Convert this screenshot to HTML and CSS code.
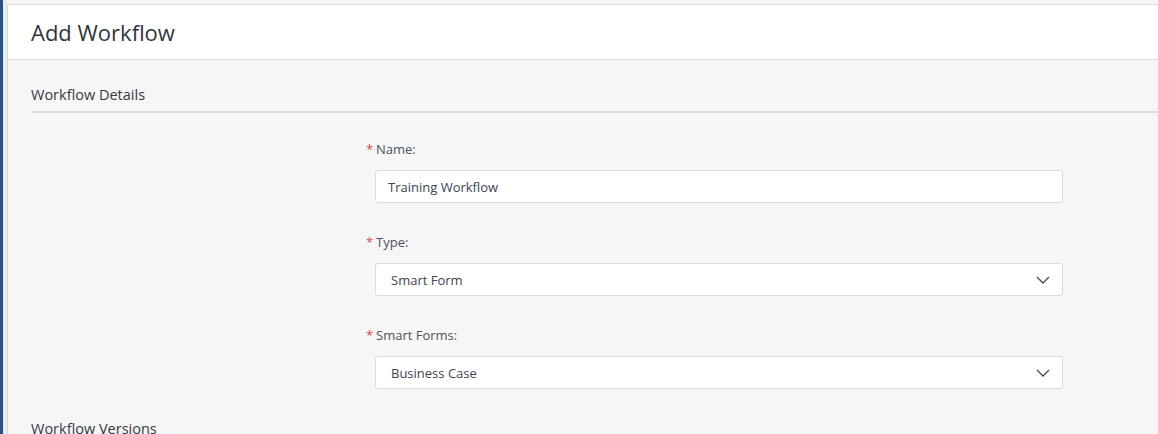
FILE: index.html
```html
<!DOCTYPE html>
<html>
<head>
<meta charset="utf-8">
<link rel="stylesheet" href="styles.css">
</head>
<body>
<div class="shell">
  <div class="rail"></div>
  <div class="gutter"></div>
  <main class="page">
    <header class="page-head">
      <h1 class="title">Add Workflow</h1>
    </header>
    <section class="section">
      <h2 class="section-title">Workflow Details</h2>
      <div class="form">
        <div class="field">
          <label class="label"><span class="req">*</span>Name:</label>
          <div class="control">Training Workflow</div>
        </div>
        <div class="field">
          <label class="label"><span class="req">*</span>Type:</label>
          <div class="control select">Smart Form
            <svg class="chev" width="14" height="8" viewBox="0 0 14 8"><path d="M1 1 L7 7 L13 1" fill="none" stroke="#3f5068" stroke-width="1.4"/></svg>
          </div>
        </div>
        <div class="field">
          <label class="label"><span class="req">*</span>Smart Forms:</label>
          <div class="control select">Business Case
            <svg class="chev" width="14" height="8" viewBox="0 0 14 8"><path d="M1 1 L7 7 L13 1" fill="none" stroke="#3f5068" stroke-width="1.4"/></svg>
          </div>
        </div>
      </div>
      <h2 class="section-title versions">Workflow Versions</h2>
    </section>
  </main>
</div>
</body>
</html>
```
FILE: styles.css
```css
html, body {
  margin: 0;
  padding: 0;
  height: 100%;
  overflow: hidden;
}
body {
  font-family: "Open Sans", "Noto Sans", sans-serif;
  color: #333b45;
  background: #f5f6f5;
}
.shell {
  display: flex;
  height: 100%;
}
.rail {
  width: 3px;
  background: #2b5383;
  flex: none;
}
.gutter {
  width: 4px;
  background: #ececec;
  flex: none;
}
.page {
  flex: 1;
  border-left: 1px solid #d8d8d8;
  border-top: 1px solid #dcdcdc;
  margin-top: 4px;
  background: #f5f6f5;
  display: flex;
  flex-direction: column;
  min-height: 0;
}
.page-head {
  flex: none;
  background: #fff;
  height: 54px;
  border-bottom: 1px solid #dcdcdc;
  display: flex;
  align-items: center;
  padding-left: 23px;
}
.title {
  margin: 0;
  font-size: 22px;
  font-weight: 400;
  color: #30363d;
}
.section {
  flex: none;
  padding-left: 23px;
}
.section-title {
  margin: 0;
  padding-top: 25px;
  padding-bottom: 6px;
  font-size: 14.5px;
  font-weight: 400;
  color: #333b45;
  border-bottom: 2px solid #dedede;
  line-height: 20px;
}
.section-title.versions {
  border-bottom: none;
  padding-top: 30px;
}
.form {
  display: flex;
  flex-direction: column;
  gap: 30px;
  padding-left: 344px;
  padding-top: 27px;
  width: 688px;
}
.field {
  display: flex;
  flex-direction: column;
  gap: 12px;
}
.label {
  font-size: 13px;
  color: #4a5361;
  line-height: 18px;
  display: flex;
}
.req {
  color: #e0443b;
  width: 10px;
  margin-left: -9px;
}
.control {
  height: 31px;
  border: 1px solid #dcdcdc;
  border-radius: 3px;
  background: #fff;
  display: flex;
  align-items: center;
  padding-left: 12px;
  font-size: 13px;
  color: #3b4452;
  position: relative;
}
.select {
  padding-left: 15px;
}
.chev {
  position: absolute;
  right: 12px;
  top: 12px;
}
```
